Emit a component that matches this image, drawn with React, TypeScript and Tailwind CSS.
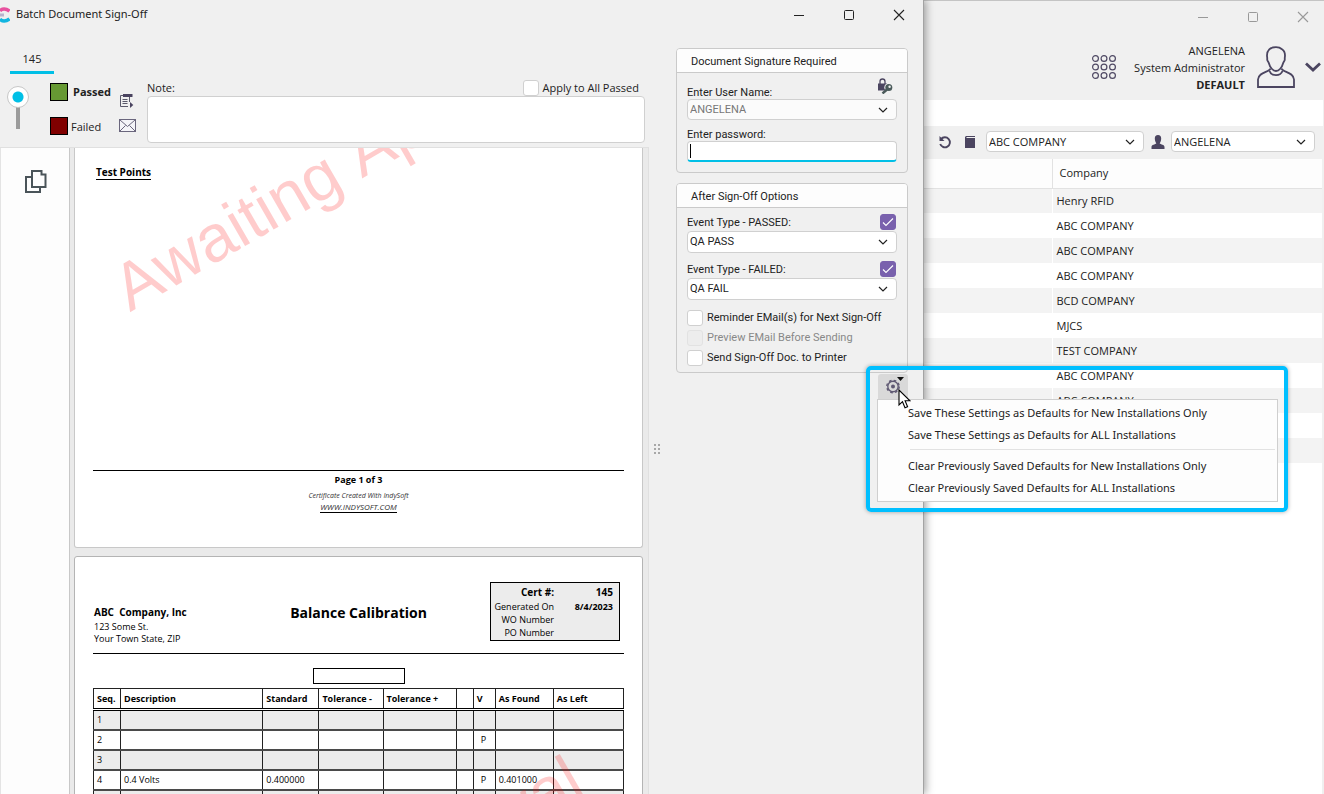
import { useState } from "react";
import type { ReactNode } from "react";

const FONT = "font-['Open_Sans','Noto_Sans',sans-serif]";

const CHECKBOX =
  "appearance-none size-4 shrink-0 rounded-[3px] border border-[#d0d0d0] bg-white disabled:border-[#e2e2e2] disabled:bg-[#ededed]";

const COMPANIES = [
  "Henry RFID",
  "ABC COMPANY",
  "ABC COMPANY",
  "ABC COMPANY",
  "BCD COMPANY",
  "MJCS",
  "TEST COMPANY",
  "ABC COMPANY",
  "ABC COMPANY",
  "",
  "",
];

const CERT_COLUMNS = [
  { label: "Seq.", width: "w-[27px]" },
  { label: "Description", width: "w-[142px]" },
  { label: "Standard", width: "w-[56px]" },
  { label: "Tolerance -", width: "w-[64px]" },
  { label: "Tolerance +", width: "w-[73px]" },
  { label: "", width: "w-[17px]" },
  { label: "V", width: "w-[22px]" },
  { label: "As Found", width: "w-[58px]" },
  { label: "As Left", width: "w-[70px]" },
];

const CERT_ROWS = [
  ["1", "", "", "", "", "", "", "", ""],
  ["2", "", "", "", "", "", "P", "", ""],
  ["3", "", "", "", "", "", "", "", ""],
  ["4", "0.4 Volts", "0.400000", "", "", "", "P", "0.401000", ""],
  ["", "", "", "", "", "", "", "", ""],
];

function Chevron({ className = "" }: { className?: string }) {
  return (
    <svg viewBox="0 0 10 6" className={className} fill="none" stroke="currentColor" aria-hidden="true">
      <path d="M1 1l4 4 4-4" strokeWidth="1.2" />
    </svg>
  );
}

function SelectBox({
  id,
  label,
  value,
  className = "",
  disabled,
}: {
  id: string;
  label?: string;
  value: string;
  className?: string;
  disabled?: boolean;
}) {
  return (
    <div className={`relative ${className}`}>
      <select
        id={id}
        aria-label={label}
        disabled={disabled}
        className="block h-full w-full appearance-none rounded-[4px] border border-[#d0d0d0] bg-white pl-0.5 leading-4 text-[#222] disabled:bg-[#fbfbfb] disabled:text-[#777] disabled:opacity-100"
      >
        <option>{value}</option>
      </select>
      <Chevron className="pointer-events-none absolute top-1/2 right-[9px] h-1.5 w-2.5 -translate-y-1/2 text-[#222]" />
    </div>
  );
}

function CaptionButtons({ className = "" }: { className?: string }) {
  return (
    <div className={`flex ${className}`}>
      <button type="button" aria-label="Minimize" className="flex h-[30px] w-[50px] items-center justify-center">
        <svg viewBox="0 0 12 12" className="size-3" stroke="currentColor">
          <path d="M1 6.5h10" />
        </svg>
      </button>
      <button type="button" aria-label="Maximize" className="flex h-[30px] w-[50px] items-center justify-center">
        <svg viewBox="0 0 12 12" className="size-3" fill="none" stroke="currentColor">
          <rect x="1.5" y="1.5" width="9" height="9" rx="1" />
        </svg>
      </button>
      <button type="button" aria-label="Close" className="flex h-[30px] w-[50px] items-center justify-center">
        <svg viewBox="0 0 12 12" className="size-3" stroke="currentColor">
          <path d="M1 1l10 10M11 1L1 11" strokeWidth="1.1" />
        </svg>
      </button>
    </div>
  );
}

function Panel({ title, children }: { title: string; children: ReactNode }) {
  return (
    <section className="overflow-hidden rounded-[4px] border border-[#cacaca]">
      <h2 className="h-6 border-b border-[#cacaca] bg-[#fdfdfd] pl-3.5 leading-[25px]">{title}</h2>
      <div className="px-2.5 pb-2.5">{children}</div>
    </section>
  );
}

function TickBox({ id, label }: { id: string; label: string }) {
  const [checked, setChecked] = useState(true);
  return (
    <div className="relative mr-px mb-px size-4">
      <input
        id={id}
        type="checkbox"
        aria-label={label}
        checked={checked}
        onChange={(e) => setChecked(e.target.checked)}
        className="block size-4 appearance-none rounded-[3px] border border-[#d0d0d0] bg-white checked:border-[#7961ad] checked:bg-[#7961ad]"
      />
      <svg
        viewBox="0 0 16 16"
        className="pointer-events-none absolute inset-0 size-4"
        fill="none"
        stroke="#fff"
        aria-hidden="true"
      >
        <path d="M3 8.5l3 3 7-7" strokeWidth="1.1" />
      </svg>
    </div>
  );
}

function Watermark({ className = "" }: { className?: string }) {
  return (
    <div
      className={`pointer-events-none absolute origin-bottom-left -rotate-30 font-['Liberation_Sans',Arial,sans-serif] text-[66px] leading-none whitespace-nowrap text-[rgba(255,0,0,0.2)] [font-kerning:none] ${className}`}
    >
      Awaiting Approval
    </div>
  );
}

function SignOffHeader() {
  return (
    <div className="flex h-[69px] items-start pl-[7px]">
      <input
        type="range"
        aria-label="Passed or failed"
        min={0}
        max={1}
        defaultValue={0}
        className="mt-2 h-[43px] w-[22px] appearance-none bg-[linear-gradient(#9b9b9b,#9b9b9b)] bg-[length:4px_34px] bg-[position:bottom_center] bg-no-repeat [writing-mode:vertical-lr] [&::-webkit-slider-thumb]:size-[22px] [&::-webkit-slider-thumb]:appearance-none [&::-webkit-slider-thumb]:rounded-full [&::-webkit-slider-thumb]:border [&::-webkit-slider-thumb]:border-[#c8c8c8] [&::-webkit-slider-thumb]:bg-[radial-gradient(circle,#00bfe6_5px,#fff_6px)]"
      />
      <div className="mt-[5px] ml-[21px] flex w-[61px] flex-col gap-4">
        <div className="flex items-center gap-[5px] font-bold">
          <span className="size-[18px] shrink-0 border border-black bg-[#669933]" />
          Passed
        </div>
        <div className="flex items-end gap-[3px]">
          <span className="size-[18px] shrink-0 border border-black bg-[#800000]" />
          Failed
        </div>
      </div>
      <div className="ml-1.5 flex w-5 flex-col items-center gap-[11px] pt-4">
        <button type="button" aria-label="Insert note template">
          <svg viewBox="0 0 14 14" className="block size-3.5" fill="none" stroke="#5b5a6b">
            <path d="M3 1.500H.5v11H8M9.500 3v5" />
            <path d="M2.500 5.500h5M2.500 7.500h5M2.500 9.500h5" />
            <path d="M3 0h9.500v3H3z" fill="#4a4460" stroke="none" />
            <path d="M10 8v6l3.300-3z" fill="#4a4460" stroke="none" />
          </svg>
        </button>
        <button type="button" aria-label="Send e-mail">
          <svg viewBox="0 0 17 13" className="block h-[13px] w-[17px]" fill="#f4f4f8" stroke="#6a667d">
            <rect x="0.5" y="0.5" width="16" height="12" />
            <path d="M1 1l7.500 6.500L16 1M1 12l5.500-5.500M16 12l-5.500-5.500" fill="none" />
          </svg>
        </button>
      </div>
      <div className="mt-0.5 ml-2.5 min-w-0 flex-1 pr-1">
        <div className="flex h-4 items-center">
          <label htmlFor="note" className="flex-1">
            Note:
          </label>
          <div className="flex items-center gap-1 pr-1.5">
            <input id="apply-all" type="checkbox" className={CHECKBOX} />
            <label htmlFor="apply-all">Apply to All Passed</label>
          </div>
        </div>
        <textarea
          id="note"
          className="block h-[47px] w-full resize-none rounded-[4px] border border-[#d0d0d0] bg-white p-1"
        />
      </div>
    </div>
  );
}

function CertificatePreview() {
  return (
    <div className="flex min-h-0 flex-1 border-t border-r border-[#e0e0e0] bg-[#eaeaea]">
      <nav className="flex w-[70px] shrink-0 justify-center border-r border-l border-r-[#c8c8c8] border-l-[#e4e4e4] bg-[#fdfdfd] pt-5">
        <button type="button" aria-label="Pages" className="size-7 self-start">
          <svg viewBox="0 0 28 28" className="size-7" fill="none" stroke="#4a5459" strokeWidth="2">
            <path d="M11 9H5v15h14v-5" />
            <path d="M11 3h9.500v3.500H24.500V19H11z" fill="#fdfdfd" />
          </svg>
        </button>
      </nav>
      <div className="min-w-0 flex-1 overflow-hidden pr-[5px] pl-1 text-[9px] leading-3 text-black">
        <article className="relative h-[400px] overflow-hidden rounded-b-[3px] border-x border-b border-[#c8c8c8] bg-white px-[18px]">
          <h3 className="pt-[18px] pl-[3px] text-[10px] font-bold">
            <span className="border-b border-black">Test Points</span>
          </h3>
          <footer className="mt-[292px] border-t border-black pt-[3px] text-center">
            <p className="font-bold">Page 1 of 3</p>
            <p className="mt-1 text-[7px] text-[#333] italic">Certificate Created With IndySoft</p>
            <a href="#indysoft" className="block text-[8px] leading-[9px] text-[#333] italic">
              <span className="border-b border-black">WWW.INDYSOFT.COM</span>
            </a>
          </footer>
          <Watermark className="top-[107px] left-[60px]" />
        </article>

        <article className="relative mt-2 h-[800px] rounded-t-[3px] border border-[#b4b4b4] bg-white px-[18px]">
          <header className="flex h-[97px] border-b border-black pt-[25px] pr-1">
            <address className="w-[134px] pt-6 pl-px whitespace-nowrap not-italic">
              <p className="text-[10px] font-bold whitespace-pre">ABC  Company, Inc</p>
              <p className="mt-[3px]">123 Some St.</p>
              <p>Your Town State, ZIP</p>
            </address>
            <h3 className="flex-1 pt-[23px] text-center text-[14px] leading-4 font-bold">Balance Calibration</h3>
            <dl className="grid h-[59px] w-[130px] grid-cols-[63px_1fr] content-start border border-black bg-[#ececec] pt-[3px] pr-1.5 text-right leading-[13px] whitespace-nowrap">
              <dt className="pb-px text-[10px] font-bold">Cert #:</dt>
              <dd className="text-[10px] font-bold">145</dd>
              <dt>Generated On</dt>
              <dd className="font-bold">8/4/2023</dd>
              <dt>WO Number</dt>
              <dd />
              <dt>PO Number</dt>
              <dd />
            </dl>
          </header>
          <div className="mx-auto mt-3.5 h-4 w-[92px] border border-black" />
          <table className="mt-1 w-full table-fixed border-collapse border border-[#222] text-left">
            <thead>
              <tr className="h-[21px] border-b-[3px] border-double border-black">
                {CERT_COLUMNS.map((col, i) => (
                  <th key={i} className={`border-x border-[#222] px-[3px] whitespace-nowrap ${col.width}`}>
                    {col.label}
                  </th>
                ))}
              </tr>
            </thead>
            <tbody>
              {CERT_ROWS.map((row, r) => (
                <tr key={r} className="h-5 border-b-2 border-[#4a4a4a] odd:bg-[#ececec]">
                  {row.map((cell, i) => (
                    <td
                      key={i}
                      className={`border-x border-[#222] whitespace-nowrap ${i === 6 ? "px-[7px]" : "px-[3px]"}`}
                    >
                      {cell}
                    </td>
                  ))}
                </tr>
              ))}
            </tbody>
          </table>
          <Watermark className="top-[443px] left-[60px]" />
        </article>
      </div>
    </div>
  );
}

function SettingsMenu() {
  return (
    <div className="relative mt-px self-end">
      <button
        type="button"
        aria-label="Default settings"
        aria-haspopup="menu"
        className="block h-[25px] w-[30px] rounded-t-[3px] bg-[#d9d9d9]"
      >
        <svg viewBox="0 0 30 25" className="h-[25px] w-[30px]" fill="none">
          <circle cx="15" cy="12.500" r="5.200" stroke="#5f5973" strokeWidth="1.400" />
          <circle cx="15" cy="12.500" r="6.200" stroke="#5f5973" strokeWidth="1.400" strokeDasharray="2.600 2.270" />
          <circle cx="15" cy="12.500" r="2" fill="#5f5973" />
          <path d="M19 3h7l-3.500 4z" fill="#111" />
        </svg>
      </button>
      <div
        role="menu"
        className="absolute top-[25px] -left-px h-[103px] w-[401px] border border-[#cfcfcf] bg-[#fdfdfd] py-0.5 font-['Noto_Sans','Open_Sans',sans-serif] text-[#222]"
      >
        <button type="button" role="menuitem" className="block h-[22px] w-full pl-[30px] text-left">
          Save These Settings as Defaults for New Installations Only
        </button>
        <button type="button" role="menuitem" className="block h-[22px] w-full pl-[30px] text-left">
          Save These Settings as Defaults for ALL Installations
        </button>
        <hr className="mt-[3px] mr-0.5 mb-[5px] ml-8 border-[#e2e2e2]" />
        <button type="button" role="menuitem" className="block h-[22px] w-full pl-[30px] text-left">
          Clear Previously Saved Defaults for New Installations Only
        </button>
        <button type="button" role="menuitem" className="block h-[22px] w-full pl-[30px] text-left">
          Clear Previously Saved Defaults for ALL Installations
        </button>
      </div>
      {/* callout frame around the open menu */}
      <div className="pointer-events-none absolute -top-2 -left-3 h-[146px] w-[422px] rounded-[5px] border-4 border-[#00bfff] shadow-[0_0_4px_rgba(0,0,0,0.35)]" />
      <svg viewBox="0 0 13 20" className="pointer-events-none absolute top-[15px] left-5 h-5 w-[13px]">
        <path d="M1 1v15l3.500-3.300L7 18.800l2.600-1.100-2.500-5.900H12z" fill="#fff" stroke="#000" strokeWidth="1.100" />
      </svg>
    </div>
  );
}

function SignOffDialog() {
  return (
    <div className="relative z-10 flex min-w-0 flex-1 flex-col border-r border-[#a3a3a3] bg-[#f0f0f0] shadow-[2px_0_8px_rgba(0,0,0,0.35)]">
      <div className="flex h-[30px] items-center">
        <svg viewBox="0 0 10 16" className="h-4 w-2.5" fill="none" strokeWidth="3.500">
          <path d="M0 4C2 1.500 6 1.200 9.500 4.200" stroke="#e8519f" />
          <path d="M0 12C2 14.500 6 14.800 9.500 11.800" stroke="#12b5e0" />
          <path d="M0 6.500h4v3H0z" fill="#b9b3cc" stroke="none" />
        </svg>
        <h1 className="ml-1.5 flex-1 pb-0.5 font-['Noto_Sans','Open_Sans',sans-serif] text-[#222]">
          Batch Document Sign-Off
        </h1>
        <CaptionButtons className="-mr-px text-[#222]" />
      </div>
      <div className="flex min-h-0 flex-1">
        <div className="flex min-w-0 flex-1 flex-col">
          <div role="tablist" className="h-12 pt-[18px] pl-2.5">
            <button
              type="button"
              role="tab"
              aria-selected="true"
              className="block h-[26px] w-11 border-b-[3px] border-[#00bfe6] pb-0.5"
            >
              145
            </button>
          </div>
          <SignOffHeader />
          <CertificatePreview />
        </div>
        <div className="flex w-[27px] shrink-0 items-center pl-[5px]">
          <svg viewBox="0 0 6 10" className="mb-[-74px] h-2.5 w-1.5" fill="#a8a8a8">
            <path d="M0 0h2v2H0zM4 0h2v2H4zM0 4h2v2H0zM4 4h2v2H4zM0 8h2v2H0zM4 8h2v2H4z" />
          </svg>
        </div>
        <aside className="mr-[15px] flex w-[232px] shrink-0 flex-col pt-[18px] font-['Roboto',sans-serif]">
          <Panel title="Document Signature Required">
            <div className="flex h-[26px] items-end justify-between">
              <label htmlFor="user-name" className="leading-3">
                Enter User Name:
              </label>
              <svg viewBox="0 0 16 16" className="mr-1 mb-[5px] size-4" fill="none">
                <path d="M3 6V3.500a2.500 2.500 0 0 1 5 0V6" stroke="#4b4560" strokeWidth="1.300" />
                <rect x="1" y="5.500" width="9" height="7" fill="#4b4560" />
                <circle cx="11.500" cy="9.500" r="4.200" fill="#f0f0f0" />
                <circle cx="11.800" cy="9.500" r="3.500" fill="#4a5a5a" />
                <path d="M10 11.500L5.500 15.500" stroke="#4a5a5a" strokeWidth="2.400" />
                <circle cx="12.600" cy="8.800" r="1.200" fill="#f0f0f0" />
              </svg>
            </div>
            <SelectBox id="user-name" value="ANGELENA" className="h-[21px]" disabled />
            <label htmlFor="password" className="mt-[9px] block leading-3">
              Enter password:
            </label>
            <div className="flex h-[21px] items-center rounded-[4px] border border-b-2 border-[#d0d0d0] border-b-[#00bfe6] bg-white">
              <span className="ml-0.5 h-3.5 w-px bg-black" />
              <input id="password" type="password" className="h-full min-w-0 flex-1 bg-transparent outline-none" />
            </div>
          </Panel>
          <div className="h-2.5" />
          <Panel title="After Sign-Off Options">
            <div className="flex h-[23px] items-end justify-between">
              <label htmlFor="passed-event" className="leading-4">
                Event Type - PASSED:
              </label>
              <TickBox id="use-passed" label="Apply passed event" />
            </div>
            <SelectBox id="passed-event" value="QA PASS" className="h-[22px]" />
            <div className="flex h-[25px] items-end justify-between">
              <label htmlFor="failed-event" className="leading-4">
                Event Type - FAILED:
              </label>
              <TickBox id="use-failed" label="Apply failed event" />
            </div>
            <SelectBox id="failed-event" value="QA FAIL" className="h-[22px]" />
            <div className="mt-2 flex h-5 items-center gap-1">
              <input id="reminder" type="checkbox" className={CHECKBOX} />
              <label htmlFor="reminder">Reminder EMail(s) for Next Sign-Off</label>
            </div>
            <div className="flex h-5 items-center gap-1 text-[#888]">
              <input id="preview" type="checkbox" disabled className={CHECKBOX} />
              <label htmlFor="preview">Preview EMail Before Sending</label>
            </div>
            <div className="-mb-1.5 flex h-5 items-center gap-1">
              <input id="printer" type="checkbox" className={CHECKBOX} />
              <label htmlFor="printer">Send Sign-Off Doc. to Printer</label>
            </div>
          </Panel>
          <SettingsMenu />
        </aside>
      </div>
    </div>
  );
}

function MainWindow() {
  return (
    <div className="flex w-[400px] shrink-0 flex-col border-t border-[#c4c4c4] bg-[#f0f0f0]">
      <CaptionButtons className="-mr-1 justify-end pt-px text-[#999]" />
      <div className="flex h-[68px] items-center justify-end pt-0.5">
        <button type="button" aria-label="Apps" className="mr-[18px]">
          <svg viewBox="0 0 24 24" className="block size-6" fill="none" stroke="#4f4964" strokeWidth="1.200">
            {[3.5, 12, 20.5].map((y) => [3.5, 12, 20.5].map((x) => <circle key={`${x}-${y}`} cx={x} cy={y} r="2.900" />))}
          </svg>
        </button>
        <div className="text-right leading-[17px] text-[#222]">
          <p>ANGELENA</p>
          <p>System Administrator</p>
          <p className="font-bold">DEFAULT</p>
        </div>
        <button type="button" aria-label="Account" className="mr-[3px] ml-3 flex items-center gap-2.5">
          <svg viewBox="0 0 38 42" className="h-[42px] w-[38px]" fill="none" stroke="#4b4560" strokeWidth="1.800">
            <path d="M19 1.200c-6 0-9 3-9 8.300 0 1.500.4 2 .2 3.500-.1 2 1.300 2.500 1.800 4.500 1 4 4 7.500 7 7.500s6-3.500 7-7.500c.5-2 1.900-2.500 1.800-4.500-.2-1.500.2-2 .2-3.500 0-3-1.300-5.300-3-6.300-1.500-1.300-3.500-2-6-2z" />
            <path d="M13.500 22.500c-1 4-12 3-12.500 11V41h36v-7.500c-.5-8-11.500-7-12.500-11" />
            <path d="M12.500 25c2 5.500 11 5.500 13 0" />
          </svg>
          <svg viewBox="0 0 16 10" className="h-2.5 w-4" fill="none" stroke="#4b4560" strokeWidth="2.800">
            <path d="M1 1.500l7 6.500 7-6.500" />
          </svg>
        </button>
      </div>
      <div className="mr-px h-[26px] bg-white" />
      <div className="flex h-[33px] items-center pr-[9px] pb-0.5 pl-3.5 text-[#4b4560]">
        <button type="button" aria-label="Refresh" className="mr-3">
          <svg viewBox="0 0 14 14" className="block size-3.5" fill="none" stroke="currentColor" strokeWidth="1.900">
            <path d="M3 4.200A5 5 0 1 1 2.200 9" />
            <path d="M1.500 1v5h5z" fill="currentColor" stroke="none" />
          </svg>
        </button>
        <svg viewBox="0 0 12 14" className="mr-2.5 h-3.5 w-3" fill="currentColor">
          <path d="M2 1h9v1H2.500v1H11v10H1V2z" />
        </svg>
        <SelectBox id="company" label="Company" value="ABC COMPANY" className="h-[21px] w-[158px]" />
        <svg viewBox="0 0 14 14" className="mr-1.5 ml-[7px] size-3.5 shrink-0" fill="currentColor">
          <path d="M7 0c2.200 0 3.200 1.500 3.200 3.500C10.200 6 9 8 8.700 8.500c1 1 4.800 1 4.800 3.500v2H.5v-2c0-2.500 3.800-2.500 4.800-3.500C5 8 3.800 6 3.800 3.500 3.800 1.500 4.800 0 7 0z" />
        </svg>
        <SelectBox id="user" label="User" value="ANGELENA" className="h-[21px] flex-1" />
      </div>
      <div className="mr-0.5 flex-1 bg-white">
        <table className="w-full table-fixed border-collapse text-left text-[#222]">
          <thead>
            <tr className="h-[29px] border-b border-[#e2e2e2] bg-[#fdfdfd]">
              <th className="w-32 border-r border-[#e2e2e2]" />
              <th className="pl-[7px] font-normal">Company</th>
            </tr>
          </thead>
          <tbody>
            {COMPANIES.map((company, i) => (
              <tr key={i} className="h-[25px] odd:bg-[#f3f3f3]">
                <td className="border-r border-white" />
                <td className="pl-1">{company}</td>
              </tr>
            ))}
          </tbody>
        </table>
      </div>
    </div>
  );
}

export default function App() {
  return (
    <div className={`flex h-screen min-h-0 overflow-hidden bg-[#f0f0f0] text-[11px] leading-4 text-[#222] ${FONT}`}>
      <SignOffDialog />
      <MainWindow />
    </div>
  );
}
